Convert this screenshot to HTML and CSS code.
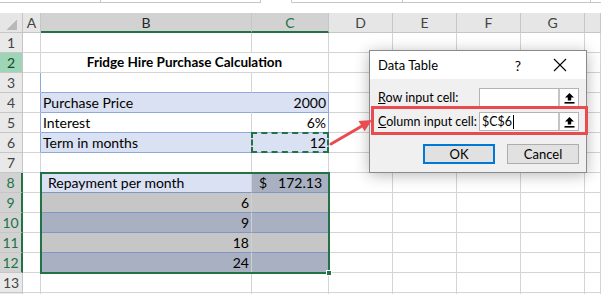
FILE: index.html
```html
<!DOCTYPE html>
<html lang="en">
<head>
  <meta charset="UTF-8">
  <meta name="viewport" content="width=device-width,initial-scale=1.0">
  <title>Fridge Hire Purchase Calculation</title>
  <link rel="stylesheet" href="styles.css">
</head>
<body>
  <div class="page">
    <div class="topbar">
      <span class="tb-name"></span><span class="tb-a"></span><span class="tb-b"></span><span class="tb-c"></span><span class="tb-d"></span><span class="tb-e"></span>
    </div>

    <div class="sheet">
      <!-- column headers -->
      <div class="corner"></div><div class="ch">A</div><div class="ch sel">B</div><div class="ch sel green">C</div><div class="ch">D</div><div class="ch">E</div><div class="ch">F</div><div class="ch">G</div><div class="ch"></div>

      <div class="rh">1</div><div class="cell"></div><div class="cell"></div><div class="cell"></div><div class="cell"></div><div class="cell"></div><div class="cell"></div><div class="cell"></div><div class="cell"></div>

      <div class="rh active">2</div><div class="cell"></div><div class="cell title">Fridge Hire Purchase Calculation</div><div class="cell"></div><div class="cell"></div><div class="cell"></div><div class="cell"></div><div class="cell"></div>

      <div class="rh">3</div><div class="cell blue-r"></div><div class="cell blue-b"></div><div class="cell blue-b"></div><div class="cell"></div><div class="cell"></div><div class="cell"></div><div class="cell"></div><div class="cell"></div>

      <div class="rh">4</div><div class="cell blue-r"></div><div class="cell fill blue-b joined">Purchase Price</div><div class="cell fill blue-b blue-r num">2000</div><div class="cell"></div><div class="cell"></div><div class="cell"></div><div class="cell"></div><div class="cell"></div>

      <div class="rh">5</div><div class="cell blue-r"></div><div class="cell blue-b">Interest</div><div class="cell blue-b blue-r num">6%</div><div class="cell"></div><div class="cell"></div><div class="cell"></div><div class="cell"></div><div class="cell"></div>

      <div class="rh">6</div><div class="cell blue-r"></div><div class="cell fill blue-b">Term in months</div><div class="cell fill blue-b blue-r num marquee">12</div><div class="cell"></div><div class="cell"></div><div class="cell"></div><div class="cell"></div><div class="cell"></div>

      <div class="rh">7</div><div class="cell"></div><div class="cell"></div><div class="cell"></div><div class="cell"></div><div class="cell"></div><div class="cell"></div><div class="cell"></div><div class="cell"></div>

      <div class="rh picked">8</div><div class="cell"></div>
      <div class="block">
        <div class="bc fill indent">Repayment per month</div><div class="bc tint-b money"><span>$</span><span>172.13</span></div>
        <div class="bc tint-w num">6</div><div class="bc tint-w"></div>
        <div class="bc tint-b num">9</div><div class="bc tint-b"></div>
        <div class="bc tint-w num">18</div><div class="bc tint-w"></div>
        <div class="bc tint-b num last">24</div><div class="bc tint-b last"></div>
      </div>
      <div class="cell"></div><div class="cell"></div><div class="cell"></div><div class="cell"></div><div class="cell"></div>

      <div class="rh picked">9</div><div class="cell"></div><div class="cell"></div><div class="cell"></div><div class="cell"></div><div class="cell"></div><div class="cell"></div>
      <div class="rh picked">10</div><div class="cell"></div><div class="cell"></div><div class="cell"></div><div class="cell"></div><div class="cell"></div><div class="cell"></div>
      <div class="rh picked">11</div><div class="cell"></div><div class="cell"></div><div class="cell"></div><div class="cell"></div><div class="cell"></div><div class="cell"></div>
      <div class="rh picked">12</div><div class="cell"></div><div class="cell"></div><div class="cell"></div><div class="cell"></div><div class="cell"></div><div class="cell"></div>

      <div class="rh">13</div><div class="cell"></div><div class="cell"></div><div class="cell"></div><div class="cell"></div><div class="cell"></div><div class="cell"></div><div class="cell"></div><div class="cell"></div>
      <div class="rh"></div><div class="cell"></div><div class="cell"></div><div class="cell"></div><div class="cell"></div><div class="cell"></div><div class="cell"></div><div class="cell"></div><div class="cell"></div>
    </div>

    <!-- Data Table dialog -->
    <div class="dialog">
      <div class="dlg-title">
        <span class="dlg-name">Data Table</span>
        <span class="dlg-help">?</span>
        <svg class="dlg-close" width="14" height="14" viewBox="0 0 14 14"><path d="M1 1 L13 13 M13 1 L1 13" stroke="#000" stroke-width="1.1" fill="none"/></svg>
      </div>
      <div class="dlg-body">
        <div class="dlg-row">
          <label><u>R</u>ow input cell:</label>
          <div class="field">
            <span class="field-text"></span>
            <span class="field-btn"><svg width="11" height="12" viewBox="0 0 11 12"><path d="M5.5 1 L1 5.5 H3.8 V8.5 H7.2 V5.5 H10 Z" fill="#000"/><rect x="0.5" y="10" width="10" height="1.6" fill="#000"/></svg></span>
          </div>
        </div>
        <div class="dlg-row second">
          <label><u>C</u>olumn input cell:</label>
          <div class="field">
            <span class="field-text">$C$6<i class="caret"></i></span>
            <span class="field-btn"><svg width="11" height="12" viewBox="0 0 11 12"><path d="M5.5 1 L1 5.5 H3.8 V8.5 H7.2 V5.5 H10 Z" fill="#000"/><rect x="0.5" y="10" width="10" height="1.6" fill="#000"/></svg></span>
          </div>
        </div>
        <div class="dlg-buttons">
          <button class="btn default">OK</button>
          <button class="btn">Cancel</button>
        </div>
      </div>
    </div>

    <div class="callout"></div>
    <svg class="arrow" width="60" height="40" viewBox="320 110 60 40">
      <line x1="331" y1="144" x2="362" y2="126" stroke="#e94b4f" stroke-width="3" stroke-linecap="round"/>
      <polygon points="372,120 358.6,120.9 364.6,131.3" fill="#e94b4f"/>
    </svg>
  </div>
</body>
</html>
```

FILE: styles.css
```css
body { margin:0; background:#fff; font-family:Lato,"Liberation Sans",sans-serif; }
.page { position:relative; width:601px; height:294px; overflow:hidden; }

/* formula bar edge */
.topbar { display:flex; height:13px; }
.topbar span { box-sizing:border-box; height:3px; border-right:1px solid #c6c6c6; border-bottom:1px solid #c6c6c6; }
.tb-name { width:101px; }
.tb-a { width:160px; }
.tb-b { width:31px; border-bottom-color:#fff !important; }
.tb-c { width:111px; }
.tb-d { width:188px; }
.tb-e { flex:1; border-right:none !important; }

/* grid */
.sheet { display:grid; grid-template-columns:23px 18px 211px 77px 64px 64px 64px 64px 1fr; grid-auto-rows:20px; font-size:14px; color:#000; }
.cell, .bc { box-sizing:border-box; border-right:1px solid #d4d4d4; border-bottom:1px solid #d4d4d4; padding:0 2px; line-height:19px; white-space:nowrap; overflow:hidden; }
.corner { box-sizing:border-box; background:#e6e6e6 linear-gradient(to top left,#b9b9b9 50%,transparent 50%) no-repeat 6px 6px/11px 11px; border-right:1px solid #c6c6c6; border-bottom:1px solid #c6c6c6; }
.ch { box-sizing:border-box; background:#e6e6e6; color:#444; text-align:center; line-height:19px; font-size:14px; border-right:1px solid #c6c6c6; border-bottom:1px solid #c6c6c6; }
.ch.sel { background:#d2d2d2; border-bottom:2px solid #217346; color:#262626; }
.ch.green { color:#217346; }
.rh { box-sizing:border-box; background:#e9e9e9; color:#444; text-align:center; line-height:19px; font-size:14px; border-right:1px solid #c6c6c6; border-bottom:1px solid #c6c6c6; }
.rh.active { background:#9fd5b7; color:#0e4d2a; }
.rh.picked { background:#d2d2d2; color:#217346; border-right:2px solid #217346; }

.title { grid-column:span 2; font-weight:bold; font-size:13.5px; text-align:center; overflow:visible; }
.fill { background:#d9e1f2; }
.num { text-align:right; }
.blue-r { border-right-color:#8ea9db; }
.blue-b { border-bottom-color:#8ea9db; }
.joined { border-right-color:#d9e1f2; }
.marquee { position:relative; overflow:visible; }
.marquee::after { content:""; position:absolute; inset:-1px; border:2px dashed #217346; }

/* selected range B8:C12 */
.block { grid-column:span 2; grid-row:span 5; display:grid; grid-template-columns:211px 77px; grid-auto-rows:20px; position:relative; outline:2px solid #217346; outline-offset:-1px; }
.block::after { content:""; position:absolute; right:-3px; bottom:-3px; width:4px; height:4px; background:#217346; border:1px solid #fff; }
.bc { border-bottom-color:#8096c4; border-right-color:#d0d0d0; }
.bc.last { border-bottom-color:#d4d4d4; }
.indent { padding-left:7px; }
.tint-w { background:#c6c6c6; }
.tint-b { background:#a9b0c1; }
.money { display:flex; justify-content:space-between; padding:0 6px 0 7px; }

/* dialog */
.dialog { position:absolute; left:369px; top:50px; width:218px; height:123px; box-sizing:border-box; border:1px solid #8a8a8a; background:#f0f0f0; box-shadow:0 2px 14px rgba(0,0,0,.28); display:flex; flex-direction:column; font-size:12px; color:#000; }
.dlg-title { height:28px; background:#fff; display:flex; align-items:center; padding:0 0 0 8px; }
.dlg-name { flex:1; font-size:13px; }
.dlg-help { font-size:14px; margin-right:32px; }
.dlg-close { margin-right:19px; }
.dlg-body { flex:1; padding:9px 7px 0 8px; }
.dlg-row { display:flex; align-items:center; height:19px; }
.dlg-row.second { margin-top:5px; }
.dlg-row label { width:101px; font-size:12.5px; white-space:nowrap; }
.field { display:flex; width:100px; height:19px; box-sizing:border-box; border:1px solid #b4b4b4; background:#fff; }
.field-text { flex:1; font-size:12.5px; line-height:17px; padding-left:2px; display:flex; align-items:center; }
.caret { display:inline-block; width:1px; height:14px; background:#000; margin-left:1px; }
.field-btn { width:20px; box-sizing:border-box; border-left:2px solid #c4c4c4; display:flex; align-items:center; justify-content:center; }
.dlg-buttons { display:flex; justify-content:flex-end; gap:12px; margin-top:13px; }
.btn { width:72px; height:20px; box-sizing:border-box; background:#e1e1e1; border:1px solid #adadad; font:13px Lato,"Liberation Sans",sans-serif; padding:0; color:#000; }
.btn.default { border:2px solid #0078d7; }

/* annotation */
.callout { position:absolute; left:371px; top:106px; width:217px; height:29px; box-sizing:border-box; border:3px solid #e94b4f; }
.arrow { position:absolute; left:320px; top:110px; }
```
